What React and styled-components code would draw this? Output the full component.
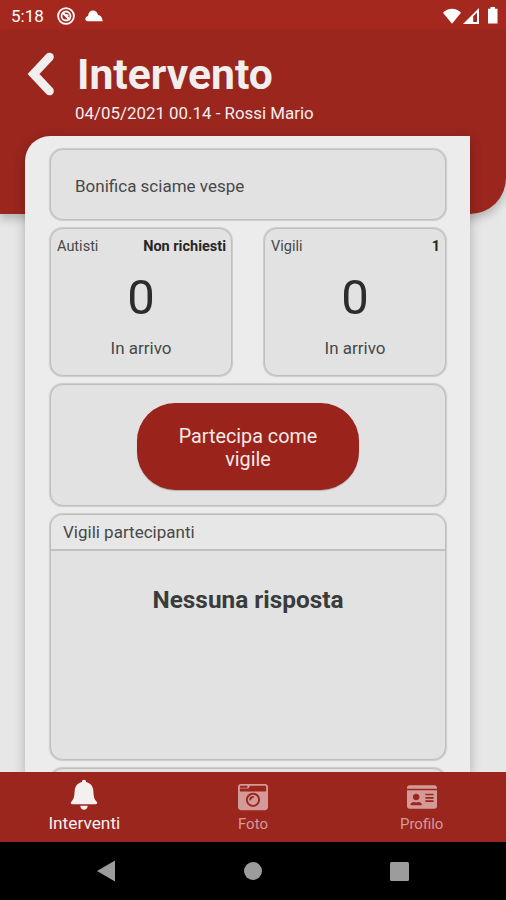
import styled, { createGlobalStyle } from 'styled-components';
import { FaCameraRetro, FaIdCard } from 'react-icons/fa';

const GlobalStyle = createGlobalStyle`
  * {
    box-sizing: border-box;
  }
  body {
    margin: 0;
    background: #e7e7e7;
    font-family: Roboto, "Liberation Sans", sans-serif;
  }
`;

const Screen = styled.div`
  display: flex;
  flex-direction: column;
  width: 506px;
  height: 900px;
  overflow: hidden;
  background: #e7e7e7;
`;

const StatusBar = styled.div`
  display: flex;
  flex: none;
  align-items: center;
  height: 30px;
  padding: 1px 7px 0 11px;
  background: #a5281f;
  color: #fff;
`;

const Clock = styled.div`
  width: 46px;
  font-size: 17px;
`;

const StatusIcons = styled.div`
  display: flex;
  flex: 1;
  align-items: center;
  gap: ${props => props.$gap};
  justify-content: ${props => props.$align || 'flex-start'};

  svg {
    display: block;
  }
`;

const Header = styled.header`
  display: flex;
  flex: none;
  align-items: flex-start;
  height: 184px;
  padding: 19px 0 0 27px;
  background: #9a261e;
  border-bottom-right-radius: 36px;
  box-shadow: 0 5px 10px rgba(0, 0, 0, 0.22);
  color: #f1eeee;
`;

const BackButton = styled.button`
  width: 48px;
  padding: 3px 0 0;
  border: 0;
  background: none;
  color: inherit;

  svg {
    display: block;
  }
`;

const Title = styled.h1`
  margin: 0 0 0 2px;
  font-size: 42.6px;
  line-height: 50px;
  font-weight: bold;
`;

const Subtitle = styled.div`
  margin-top: 3px;
  font-size: 16.9px;
  line-height: 22px;
`;

const Sheet = styled.main`
  display: flex;
  flex: 1;
  flex-direction: column;
  gap: 8px;
  min-height: 0;
  margin: -78px 36px 0 25px;
  padding: 13px 24px 0 25px;
  overflow: hidden;
  background: #ececec;
  border-top-left-radius: 25px;
  box-shadow: 0 4px 12px rgba(0, 0, 0, 0.25);
  color: #484848;
  z-index: 1;
`;

const Card = styled.section`
  display: flex;
  flex: none;
  flex-direction: column;
  height: ${props => props.$height};
  background: #e2e2e2;
  border: 1px solid #bfbfbf;
  border-radius: 13px;
  box-shadow: 0 0 1px 0.5px rgba(0, 0, 0, 0.14);
  overflow: hidden;
`;

const Description = styled.p`
  margin: auto 24px;
  padding-top: 2px;
  font-size: 17px;
`;

const Counters = styled.div`
  display: grid;
  flex: none;
  grid-template-columns: 1fr 1fr;
  gap: 32px;
`;

const CounterTop = styled.div`
  display: flex;
  justify-content: space-between;
  padding: 9px 5px 0 6px;
  font-size: 14.5px;
  line-height: 18px;

  b {
    color: #262626;
  }
`;

const Count = styled.div`
  margin-top: 13px;
  font-size: 49px;
  line-height: 58px;
  text-align: center;
  color: #2c2c2c;
`;

const CountLabel = styled.div`
  margin-top: 11px;
  font-size: 17px;
  line-height: 20px;
  text-align: center;
`;

const JoinButton = styled.button`
  width: 222px;
  height: 87px;
  margin: 18px auto 0;
  padding: 2px 36px 0;
  border: 0;
  border-radius: 38px;
  background: #9a231b;
  box-shadow: 0 1px 1px rgba(0, 0, 0, 0.2);
  color: #f6e9e8;
  font-family: inherit;
  font-size: 19.8px;
  line-height: 23px;
`;

const CardTitle = styled.div`
  height: 36px;
  padding: 0 12px;
  border-bottom: 2px solid #c0c0c0;
  background: #e7e7e7;
  font-size: 17px;
  line-height: 35px;
`;

const Empty = styled.div`
  margin-top: 35px;
  font-size: 24.4px;
  line-height: 28px;
  font-weight: bold;
  text-align: center;
  color: #3b3b3b;
`;

const TabBar = styled.nav`
  display: grid;
  flex: none;
  grid-template-columns: repeat(3, 1fr);
  height: 70px;
  background: #9a261e;
  z-index: 2;
`;

const Tab = styled.div`
  display: flex;
  flex-direction: column;
  align-items: center;
  padding-top: ${props => (props.$active ? '7px' : '10px')};
  color: ${props => (props.$active ? '#f4f0f0' : '#d39a97')};
  font-size: ${props => (props.$active ? '17.3px' : '15px')};
  line-height: 20px;

  svg {
    display: block;
    margin-bottom: ${props => (props.$active ? '3px' : '2px')};
  }
`;

const SystemBar = styled.div`
  display: grid;
  flex: none;
  grid-template-columns: 1fr 1fr 1fr;
  align-items: center;
  justify-items: center;
  height: 58px;
  padding: 0 33px 0 32px;
  background: #000;
`;

function Counter({ title, required, count }) {
  return (
    <Card $height="148px">
      <CounterTop>
        <span>{title}</span>
        <b>{required}</b>
      </CounterTop>
      <Count>{count}</Count>
      <CountLabel>In arrivo</CountLabel>
    </Card>
  );
}

function BellIcon() {
  return (
    <svg width="28" height="31" viewBox="0 0 28 31" fill="currentColor">
      <path d="M14 .8C15.300 .8 16 1.700 16 3C20.500 4 23 7.200 23.300 11.500C23.700 17.500 24 20 26.500 22.500C27.800 23.900 27.200 25.300 25.500 25.300H2.500C.8 25.300.2 23.900 1.500 22.500C4 20 4.300 17.500 4.700 11.500C5 7.200 7.500 4 12 3C12 1.700 12.700.8 14 .8Z" />
      <path d="M10.300 26.700H17.700C17.500 29.200 16 30.700 14 30.700S10.500 29.200 10.300 26.700Z" />
    </svg>
  );
}

export default function App() {
  return (
    <>
      <GlobalStyle />
      <Screen>
        <StatusBar>
          <Clock>5:18</Clock>
          <StatusIcons $gap="10px">
            <svg width="18" height="18" viewBox="0 0 18 18" fill="none" stroke="#fff">
              <circle cx="9" cy="9" r="7.9" strokeWidth="1.8" />
              <circle cx="9" cy="9" r="4.5" strokeWidth="1.8" />
              <path d="M5.500 5.500L13 13M8.500 8l3 .5" strokeWidth="2" />
            </svg>
            <svg width="18" height="12" viewBox="0 0 18 12" fill="#fff">
              <path d="M2.800 11.200C-.4 11.200-.6 6.800 3 6C3.500 2.300 5.600.5 8 .5C10.600.5 12.400 2.300 13 5C15.500 5.200 17.500 7.500 17.700 11.200Z" />
            </svg>
          </StatusIcons>
          <StatusIcons $gap="2px" $align="flex-end">
            <svg width="18" height="16" viewBox="0 0 18 16" fill="#fff">
              <path d="M9 15.800L0 4.800C5-.6 13-.6 18 4.800Z" />
            </svg>
            <svg width="16" height="16" viewBox="0 0 16 16">
              <path d="M16 0V16H0Z" fill="#fff" />
              <path d="M8 10.500L14 4.500V14H8Z" fill="#a5281f" />
              <path d="M8 8.500H10.200V14H8Z" fill="#fff" />
            </svg>
            <svg width="18" height="17" viewBox="0 0 18 17" fill="#fff">
              <path d="M9.500 0H14V1.800H16.500V16.500H7V1.800H9.500Z" />
            </svg>
          </StatusIcons>
        </StatusBar>

        <Header>
          <BackButton aria-label="Indietro">
            <svg width="28" height="44" viewBox="0 0 28 44" fill="none" stroke="currentColor">
              <path d="M22.500 5L6.500 22L22.500 39" strokeWidth="8.600" strokeLinecap="round" />
            </svg>
          </BackButton>
          <div>
            <Title>Intervento</Title>
            <Subtitle>04/05/2021 00.14 - Rossi Mario</Subtitle>
          </div>
        </Header>

        <Sheet>
          <Card $height="71px">
            <Description>Bonifica sciame vespe</Description>
          </Card>
          <Counters>
            <Counter title="Autisti" required="Non richiesti" count={0} />
            <Counter title="Vigili" required="1" count={0} />
          </Counters>
          <Card $height="122px">
            <JoinButton>Partecipa come vigile</JoinButton>
          </Card>
          <Card $height="246px">
            <CardTitle>Vigili partecipanti</CardTitle>
            <Empty>Nessuna risposta</Empty>
          </Card>
          <Card $height="80px" />
        </Sheet>

        <TabBar>
          <Tab $active>
            <BellIcon />
            Interventi
          </Tab>
          <Tab>
            <FaCameraRetro size={30} />
            Foto
          </Tab>
          <Tab>
            <FaIdCard size={30} />
            Profilo
          </Tab>
        </TabBar>

        <SystemBar>
          <svg width="18" height="22" viewBox="0 0 18 22" fill="#9c9c9c">
            <path d="M18 .5V21.500L0 11Z" />
          </svg>
          <svg width="18" height="18" viewBox="0 0 18 18" fill="#9c9c9c">
            <circle cx="9" cy="9" r="9" />
          </svg>
          <svg width="19" height="19" viewBox="0 0 19 19" fill="#9c9c9c">
            <rect width="19" height="19" rx="1.500" />
          </svg>
        </SystemBar>
      </Screen>
    </>
  );
}
